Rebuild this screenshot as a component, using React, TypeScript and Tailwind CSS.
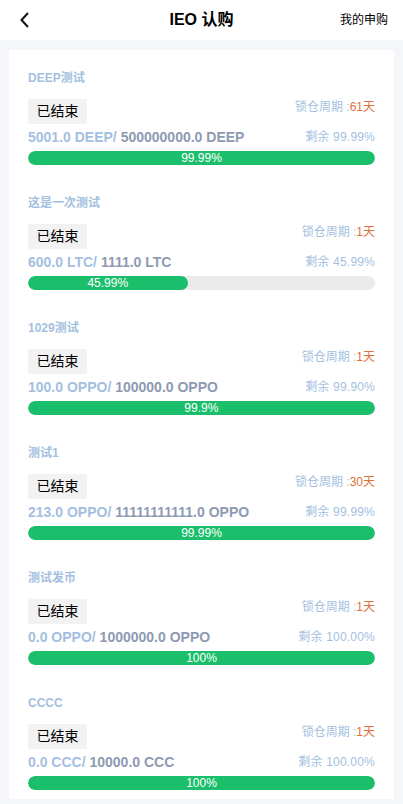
const items = [
  { name: 'DEEP测试', sold: '5001.0 DEEP/', total: '500000000.0 DEEP', lock: '61天', left: '99.99%', pct: 99.99, label: '99.99%' },
  { name: '这是一次测试', sold: '600.0 LTC/', total: '1111.0 LTC', lock: '1天', left: '45.99%', pct: 45.99, label: '45.99%' },
  { name: '1029测试', sold: '100.0 OPPO/', total: '100000.0 OPPO', lock: '1天', left: '99.90%', pct: 99.9, label: '99.9%' },
  { name: '测试1', sold: '213.0 OPPO/', total: '11111111111.0 OPPO', lock: '30天', left: '99.99%', pct: 99.99, label: '99.99%' },
  { name: '测试发币', sold: '0.0 OPPO/', total: '1000000.0 OPPO', lock: '1天', left: '100.00%', pct: 100, label: '100%' },
  { name: 'CCCC', sold: '0.0 CCC/', total: '10000.0 CCC', lock: '1天', left: '100.00%', pct: 100, label: '100%' },
];

export default function App() {
  return (
    <main
      className="w-[403px] h-[804px] bg-[#f5f6fa] overflow-hidden"
      style={{ fontFamily: '"Liberation Sans", "Noto Sans CJK SC", sans-serif' }}
    >
      {/* Header */}
      <header className="h-[40px] bg-white flex items-center justify-between px-[18px] relative">
        <svg width="12" height="18" viewBox="0 0 12 18" className="ml-[1px]">
          <path d="M9 2 L2.5 9 L9 16" fill="none" stroke="#111" strokeWidth="2" />
        </svg>
        <h1 className="absolute left-0 right-0 text-center text-[16px] font-bold text-black pointer-events-none">IEO 认购</h1>
        <span className="text-[12px] text-black mr-[-3px]">我的申购</span>
      </header>

      {/* List card */}
      <div className="mx-[9px] mt-[10px] bg-white px-[19px] pt-[20px] pb-[9px]">
        {items.map((it, i) => (
          <div key={i} className={i < items.length - 1 ? 'mb-[30px]' : ''}>
            <div className="text-[12px] leading-[17px] font-bold text-[#a4bfdf]">{it.name}</div>
            <div className="mt-[12px] flex items-start justify-between">
              <span className="h-[25px] w-[59px] flex items-center justify-center bg-[#f2f2f2] text-[14px] text-black rounded-[2px]">已结束</span>
              <span className="text-[12px] leading-[17px] text-[#a4bfdf]">
                锁仓周期 :<span className="text-[#e0703a]">{it.lock}</span>
              </span>
            </div>
            <div className="mt-[4px] flex items-center justify-between h-[18px]">
              <span className="text-[14px] font-bold">
                <span className="text-[#a4bfdf]">{it.sold} </span>
                <span className="text-[#8e9ab2]">{it.total}</span>
              </span>
              <span className="text-[12px] tracking-[0.2px] text-[#a4bfdf]">剩余 {it.left}</span>
            </div>
            <div className="mt-[5px] h-[14px] rounded-full bg-[#ebebeb] overflow-hidden">
              <div
                className="h-full bg-[#1bbf6b] rounded-full flex items-center justify-center text-[12px] text-white leading-none"
                style={{ width: `${it.pct}%` }}
              >
                {it.label}
              </div>
            </div>
          </div>
        ))}
      </div>
    </main>
  );
}
